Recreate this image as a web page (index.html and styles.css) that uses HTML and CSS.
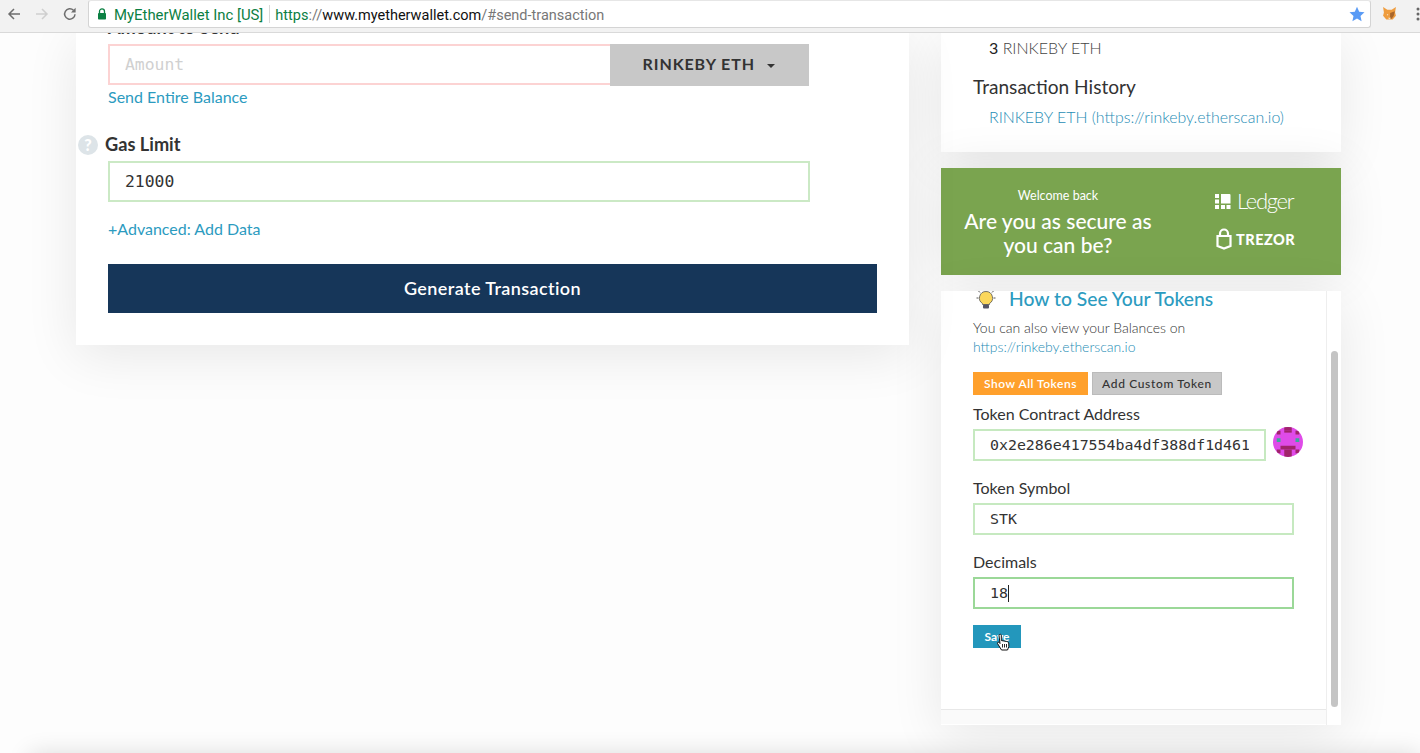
FILE: index.html
```html
<!DOCTYPE html>
<html lang="en">
<head>
<meta charset="utf-8">
<title>MyEtherWallet</title>
<link rel="stylesheet" href="styles.css">
</head>
<body>
<header class="toolbar">
  <svg class="nav-ico" width="16" height="16" viewBox="0 0 16 16"><path d="M14 8H3M8 3 3 8l5 5" fill="none" stroke="#6e6e6e" stroke-width="1.5"/></svg>
  <svg class="nav-ico" width="16" height="16" viewBox="0 0 16 16"><path d="M2 8h11M8 3l5 5-5 5" fill="none" stroke="#cfcfcf" stroke-width="1.5"/></svg>
  <svg class="nav-ico" width="16" height="16" viewBox="0 0 16 16"><path d="M13 8.200A5.200 5.200 0 1 1 11.500 4.300" fill="none" stroke="#6e6e6e" stroke-width="1.500"/><path d="M13.600 1.800v4.600H9z" fill="#6e6e6e"/></svg>
  <div class="omnibox">
    <svg class="lock" width="10" height="12" viewBox="0 0 10 12"><path d="M2.500 5V3.400a2.500 2.500 0 0 1 5 0V5" fill="none" stroke="#0b8043" stroke-width="1.300"/><rect x="1" y="5" width="8" height="6.500" rx=".8" fill="#0b8043"/></svg>
    <span class="ev ev-name">MyEtherWallet Inc [US]</span>
    <span class="sep"></span>
    <span class="url"><span class="ev">https</span><span class="dim">://</span><span class="host">www.myetherwallet.com</span><span class="dim">/#send-transaction</span></span>
    <svg class="star" width="16" height="16" viewBox="0 0 16 16"><path d="M8 .8l2.200 4.900 5.300.6-4 3.600 1.100 5.300L8 12.500l-4.600 2.700 1.100-5.300-4-3.600 5.300-.6z" fill="#5a9bf5"/></svg>
  </div>
  <svg class="fox" width="15" height="15" viewBox="0 0 14 14"><path d="M1 1l4 2.500h4L13 1l-.8 5 .8 3-3 3.500H4L1 9l.8-3z" fill="#ef9d3f"/><path d="M7.600 6.500 12 5l-1 4-2 3H7.500z" fill="#a9662b"/><path d="M4.500 7.500l1.500.5-1 1zM5.500 11h3l-1.500 1.500z" fill="#f6e3c9"/></svg>
  <svg class="dots" width="4" height="14" viewBox="0 0 4 14"><circle cx="2" cy="2" r="1.500" fill="#666"/><circle cx="2" cy="7" r="1.500" fill="#666"/><circle cx="2" cy="12" r="1.500" fill="#666"/></svg>
</header>

<div class="viewport">
  <div class="columns">
    <main class="card send">
      <label class="label label-amount">Amount to Send</label>
      <div class="amount-row">
        <input class="field field-bad amount-input" placeholder="Amount" aria-label="Amount">
        <button class="unit-btn">RINKEBY ETH <span class="caret"></span></button>
      </div>
      <a class="link send-all">Send Entire Balance</a>
      <div class="gas-label">
        <span class="help">?</span>
        <label class="label">Gas Limit</label>
      </div>
      <input class="field field-good gas-input" value="21000" aria-label="Gas Limit">
      <a class="link advanced">+Advanced: Add Data</a>
      <button class="generate">Generate Transaction</button>
    </main>

    <aside class="side">
      <section class="card balance">
        <p class="bal-line"><span class="bal-num">3</span> RINKEBY ETH</p>
        <h4 class="hist-title">Transaction History</h4>
        <a class="link hist-link">RINKEBY ETH (https://rinkeby.etherscan.io)</a>
      </section>

      <section class="promo">
        <div class="promo-text">
          <p class="promo-small">Welcome back</p>
          <p class="promo-big">Are you as secure as<br>you can be?</p>
        </div>
        <div class="promo-logos">
          <div class="ledger">
            <svg width="17" height="17" viewBox="0 0 17 17"><rect x="0" y="1" width="4" height="4" fill="#fff"/><rect x="0" y="6.500" width="4" height="4" fill="#fff"/><rect x="0" y="12" width="4" height="4" fill="#fff"/><rect x="6" y="12" width="4" height="4" fill="#fff"/><rect x="11.500" y="12" width="4" height="4" fill="#fff"/><path d="M6 1h8.500q1 0 1 1v8.500H6z" fill="#fff"/></svg>
            <span>Ledger</span>
          </div>
          <div class="trezor">
            <svg width="16" height="22" viewBox="0 0 16 22"><path d="M4 8V5.500a4 4 0 0 1 8 0V8" fill="none" stroke="#fff" stroke-width="2.200"/><path d="M1.500 8h13v10l-6.500 2.500L1.500 18z" fill="none" stroke="#fff" stroke-width="2.200"/></svg>
            <span>TREZOR</span>
          </div>
        </div>
      </section>

      <section class="card tokens">
        <div class="tokens-scroll">
          <div class="tokens-body">
            <h3 class="tokens-title">
              <svg width="22" height="22" viewBox="0 0 22 22"><path d="M11 0v2M3.500 3l1.500 1.500M18.500 3 17 4.500M1.500 10h2M18.500 10h2" stroke="#555" stroke-width="1"/><path d="M11 3.500a6.500 6.500 0 0 0-3.500 12v1h7v-1A6.500 6.500 0 0 0 11 3.500z" fill="#fbd75b" stroke="#555" stroke-width=".8"/><rect x="8" y="16.500" width="6" height="4" rx="1" fill="#556"/></svg>
              <span>How to See Your Tokens</span>
            </h3>
            <p class="tokens-note">You can also view your Balances on<br><a class="link">https://rinkeby.etherscan.io</a></p>
            <div class="tabs">
              <button class="tab tab-on">Show All Tokens</button>
              <button class="tab tab-off">Add Custom Token</button>
            </div>
            <label class="t-label">Token Contract Address</label>
            <div class="addr-row">
              <input class="t-field t-addr" value="0x2e286e417554ba4df388df1d461" aria-label="Token Contract Address">
              <svg class="identicon" width="30" height="30" viewBox="0 0 8 8">
                <rect width="8" height="8" fill="#df4be8"/>
                <rect x="3" y="0" width="2" height="1" fill="#a0246b"/>
                <rect x="1" y="1" width="1" height="1" fill="#a0246b"/>
                <rect x="6" y="1" width="1" height="1" fill="#a0246b"/>
                <rect x="3" y="1" width="2" height=".5" fill="#a0246b"/>
                <rect x="1" y="3" width="1" height="1" fill="#3ba99a"/>
                <rect x="6" y="3" width="1" height="1" fill="#3ba99a"/>
                <rect x="2" y="5" width="4" height="1" fill="#a0246b"/>
                <rect x="3" y="6" width="2" height="2" fill="#a0246b"/>
                <rect x="1" y="6" width="1" height="1" fill="#a0246b"/>
                <rect x="6" y="6" width="1" height="1" fill="#a0246b"/>
              </svg>
            </div>
            <label class="t-label">Token Symbol</label>
            <input class="t-field" value="STK" aria-label="Token Symbol">
            <label class="t-label">Decimals</label>
            <div class="t-field t-focus"><span>18</span><i class="text-caret"></i></div>
            <div class="save-wrap">
              <button class="save">Save</button>
              <svg class="hand" width="14" height="18" viewBox="0 0 14 18"><path d="M3.500 1.500c1-.6 1.800 0 1.800 1v5l5.500 1c1.500.3 2 1 2 2.500v2.500L11.500 17H5.500L1.500 10.500c-.5-1 .8-1.800 1.600-1L4 10.500 3 2.500z" fill="#fff" stroke="#111" stroke-width="1"/><path d="M6.500 11v3.500M8.500 11v3.500M10.500 11v3.500" stroke="#111" stroke-width=".9"/></svg>
            </div>
          </div>
          <div class="tokens-foot"></div>
        </div>
        <div class="scrolltrack"><div class="thumb"></div></div>
      </section>
    </aside>
  </div>
  <div class="lower"></div>
</div>
</body>
</html>
```
FILE: styles.css
```css
* { box-sizing: border-box; }
html, body { margin: 0; height: 753px; overflow: hidden; }
body { background: #fdfdfd; font-family: Lato, "Open Sans", sans-serif; color: #333; }
p, h3, h4 { margin: 0; font-weight: 400; }
button, input { font: inherit; margin: 0; outline: 0; }
a { cursor: pointer; }

.toolbar {
  height: 33px; background: #f2f2f2; border-bottom: 1px solid #d9d9d9;
  display: flex; align-items: center; padding: 0 0 5px 6px; position: relative; z-index: 2;
}
.nav-ico { margin-right: 12px; flex: none; }
.nav-ico:nth-child(3) { margin-right: 10px; }
.omnibox {
  width: 1283px; height: 28px; background: #fff; border: 1px solid #d4d4d4; border-top-color: #e6e6e6; border-radius: 3px;
  display: flex; align-items: center; padding: 0 5px 0 8px; font: 14.500px Roboto, sans-serif;
  flex: none; margin-right: 11px;
}
.lock { margin-right: 7px; flex: none; }
.ev { color: #0b8043; }
.ev-name { font-size: 14.900px; padding-top: 3px; }
.sep { width: 1px; height: 18px; background: #d8d8d8; margin: 0 5px 0 6px; }
.dim { color: #777; }
.host { color: #111; }
.url { flex: 1; padding-top: 3px; }
.fox { margin-right: 19px; flex: none; }
.dots { flex: none; }

.viewport { height: 720px; overflow: hidden; }
.columns { display: flex; align-items: flex-start; padding-left: 76px; margin-top: -1px; }
.card { background: #fff; box-shadow: 0 10px 50px rgba(0,0,0,.09); }

.send { width: 833px; height: 313px; padding: 0 32px; position: relative; overflow: hidden; margin-right: 32px; display: flex; flex-direction: column; align-items: flex-start; }
.label { font-size: 18.200px; font-weight: 700; color: #333; line-height: 22px; }
.label-amount { margin-top: -16px; margin-bottom: 6px; }
.amount-row { display: flex; width: 701px; height: 42px; }
.field { border: 2px solid; background: #fff; font-family: "DejaVu Sans Mono", monospace; font-size: 16.400px; padding: 0 15px; color: #333; }
.field::placeholder { color: #d0d0d0; }
.field-bad { border-color: #fcd3d3; }
.field-good { border-color: #cbe9c5; }
.amount-input { width: 503px; height: 41px; border-right: 0; }
.unit-btn { width: 199px; height: 42px; background: #c8c8c8; border: 0; font-size: 16px; font-weight: 700; letter-spacing: .9px; color: #333; padding: 0 2px 3px 0; }
.caret { display: inline-block; width: 0; height: 0; border: 4px solid transparent; border-top-color: #333; border-bottom: 0; margin-left: 7px; vertical-align: middle; }
.link { color: #2c9bbf; }
.send-all { font-size: 16px; line-height: 20px; margin-top: 1px; }
.gas-label { display: flex; align-items: center; margin: 25px 0 6px -30px; }
.help { width: 20px; height: 20px; border-radius: 50%; background: #dde4e8; color: #fff; font-weight: 900; font-size: 16px; text-align: center; line-height: 20px; margin-right: 7px; margin-top: 3px; }
.gas-input { width: 702px; height: 41px; flex: none; }
.advanced { font-size: 16px; line-height: 20px; margin-top: 17px; }
.generate { width: 769px; height: 49px; flex: none; margin-top: 25px; padding: 0 0 2px; background: #163659; color: #fff; border: 0; font-size: 18px; font-weight: 600; letter-spacing: .4px; }

.side { width: 400px; display: flex; flex-direction: column; gap: 16px; }
.balance { height: 120px; padding: 0 32px; }
.bal-line { font-size: 16px; line-height: 20px; padding: 6px 0 0 16px; color: #444; font-weight: 300; }
.bal-num { color: #222; font-weight: 400; }
.hist-title { font-size: 19.100px; line-height: 24px; margin-top: 17px; color: #333; }
.hist-link { display: block; font-size: 15.900px; font-weight: 300; line-height: 20px; margin: 8px 0 0 16px; white-space: nowrap; color: #1f8db5; }

.promo { height: 107px; background: #7aa44f; color: #fff; display: flex; box-shadow: 0 0 50px rgba(0,0,0,.09); }
.promo-text { width: 234px; text-align: center; padding-top: 19px; }
.promo-small { font-size: 12.500px; line-height: 17px; }
.promo-big { font-size: 21px; line-height: 24px; font-weight: 500; margin-top: 5px; }
.promo-logos { padding: 21px 0 0 40px; }
.ledger { display: flex; align-items: center; gap: 5px; font-size: 22px; font-weight: 300; line-height: 24px; letter-spacing: -1.300px; }
.trezor { display: flex; align-items: center; gap: 4px; font-size: 14.500px; font-weight: 900; margin-top: 15px; margin-left: 1px; letter-spacing: .5px; }

.tokens { height: 434px; display: flex; overflow: hidden; }
.tokens-scroll { width: 386px; border-right: 1px solid #eee; display: flex; flex-direction: column; flex: none; }
.tokens-body { height: 419px; padding: 0 32px; border-bottom: 1px solid #e8e8e8; flex: none; }
.tokens-foot { height: 14px; background: #fafafa; }
.tokens-title { display: flex; align-items: center; gap: 12px; font-size: 19.300px; font-weight: 500; line-height: 16px; color: #2c9bbf; margin: 0 0 0 2px; }
.tokens-title svg { margin: -3px 0; flex: none; }
.tokens-note { font-size: 14px; line-height: 19px; margin-top: 11px; color: #333; font-weight: 300; }
.tokens-note .link { color: #1f8db5; }
.tabs { display: flex; gap: 4px; margin-top: 16px; }
.tab { height: 23px; border: 0; font-size: 12px; font-weight: 600; letter-spacing: .5px; padding: 0; }
.tab-on { width: 115px; background: #ffa02c; color: #fff; }
.tab-off { width: 130px; background: #c8c8c8; border: 1px solid #bbb; color: #333; font-weight: 500; letter-spacing: .65px; }
.t-label { display: block; font-size: 16px; line-height: 20px; color: #333; margin-top: 17px; margin-bottom: 5px; }
.tabs + .t-label { margin-top: 9px; }
.addr-row { display: flex; align-items: flex-start; gap: 7px; width: 340px; }
.t-field { display: block; width: 321px; height: 32px; border: 2px solid #c6e9c0; background: #fff; padding: 0 15px; font-family: "DejaVu Sans Mono", monospace; font-size: 14.900px; color: #333; line-height: 28px; flex: none; }
.t-addr { width: 293px; }
.identicon { border-radius: 50%; margin-top: -2px; flex: none; }
.t-focus { border-color: #9bd898; display: flex; align-items: center; }
.text-caret { width: 1px; height: 17px; background: #222; }
.save-wrap { position: relative; width: 48px; margin-top: 16px; }
.save { display: block; width: 48px; height: 23px; background: #2397bc; color: #fff; border: 0; font-size: 12px; font-weight: 700; padding: 0; }
.hand { position: absolute; left: 23px; top: 8px; }
.scrolltrack { flex: 1; padding: 60px 3px 0 4px; }
.thumb { height: 356px; background: #c4c4c4; border-radius: 4px; }

.lower { height: 40px; margin: 33px 0 0 30px; background: #fdfdfd; box-shadow: 0 -4px 24px rgba(0,0,0,.14); }
```
